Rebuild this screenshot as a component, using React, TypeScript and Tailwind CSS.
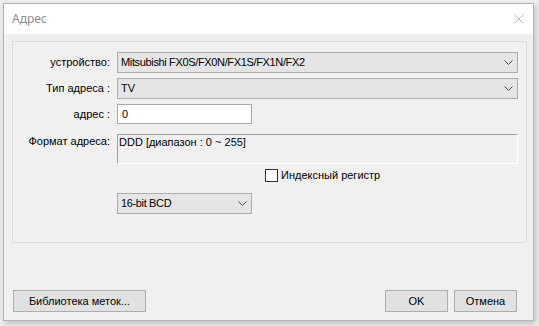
import { X } from 'lucide-react'

function Chevron() {
  return (
    <svg width="9" height="5" viewBox="0 0 9 5" className="shrink-0">
      <path d="M0.5 0.5 L4.5 4.5 L8.5 0.5" fill="none" stroke="#4a4a4a" strokeWidth="1" />
    </svg>
  )
}

function Combo({ value, width, tight }: { value: string; width: string; tight?: boolean }) {
  return (
    <div
      className={`${width} h-[21px] bg-[#e5e5e5] border border-[#adadad] flex items-center justify-between pl-[3px] pr-[4px]`}
    >
      <span className={tight ? 'tracking-[-0.35px]' : ''}>{value}</span>
      <Chevron />
    </div>
  )
}

function Label({ children }: { children: string }) {
  return <div className="text-right leading-[21px] whitespace-nowrap">{children}</div>
}

export default function App() {
  return (
    <main
      className="w-[539px] h-[326px] bg-[#ededed] pt-[3px] pl-[3px] overflow-hidden text-[11px] text-black"
      style={{ fontFamily: '"Liberation Sans", Arial, sans-serif' }}
    >
      {/* Dialog window */}
      <div className="w-[531px] h-[318px] border border-[#b4b4b4] bg-[#f0f0f0] flex flex-col shadow-[2px_3px_6px_rgba(0,0,0,0.18)]">
        {/* Title bar */}
        <div className="h-[30px] bg-white flex items-center justify-between pl-[8px] pr-[6px] shrink-0">
          <span
            className="text-[12px] text-[#8c8c8c]"
            style={{ fontFamily: '"Noto Sans", "Open Sans", sans-serif' }}
          >
            Адрес
          </span>
          <X size={16} strokeWidth={0.9} color="#8a8a8a" />
        </div>

        {/* Body */}
        <div className="flex flex-col pl-[8px] pt-[7px]">
          {/* Group panel */}
          <div className="w-[515px] h-[202px] border border-[#dcdcdc] pt-[10px] pr-[8px]">
            <div className="grid grid-cols-[97px_1fr] gap-x-[7px] gap-y-[5px]">
              <Label>устройство:</Label>
              <Combo value="Mitsubishi FX0S/FX0N/FX1S/FX1N/FX2" width="w-[401px]" tight />

              <Label>Тип адреса :</Label>
              <Combo value="TV" width="w-[401px]" />

              <Label>адрес :</Label>
              <div className="w-[135px] h-[20px] bg-white border border-[#a9a9a9] flex items-center pl-[4px]">
                0
              </div>

              <div className="text-right whitespace-nowrap mt-[4px] leading-[15px]">Формат адреса:</div>
              <div className="w-[401px] h-[30px] mt-[4px] border-t border-l border-[#a0a0a0] border-r border-b border-r-white border-b-white pl-[1px] leading-[15px]">
                DDD [диапазон : 0 ~ 255]
              </div>
            </div>

            {/* Index register checkbox */}
            <div className="flex items-center mt-[5px] ml-[252px] h-[13px]">
              <div className="w-[13px] h-[13px] bg-white border border-[#333333]" />
              <span className="ml-[3px]">Индексный регистр</span>
            </div>

            {/* Data format */}
            <div className="mt-[11px] ml-[104px]">
              <Combo value="16-bit BCD" width="w-[135px]" tight />
            </div>
          </div>

          {/* Buttons */}
          <div className="flex items-center mt-[47px] pl-[1px] w-[505px]">
            <button className="w-[133px] h-[22px] bg-[#e1e1e1] border border-[#adadad] flex items-center justify-center font-normal">
              Библиотека меток...
            </button>
            <div className="flex-1" />
            <button className="w-[63px] h-[22px] bg-[#e1e1e1] border border-[#adadad] flex items-center justify-center font-normal">
              OK
            </button>
            <button className="w-[63px] h-[22px] ml-[6px] bg-[#e1e1e1] border border-[#adadad] flex items-center justify-center font-normal">
              Отмена
            </button>
          </div>
        </div>
      </div>
    </main>
  )
}
